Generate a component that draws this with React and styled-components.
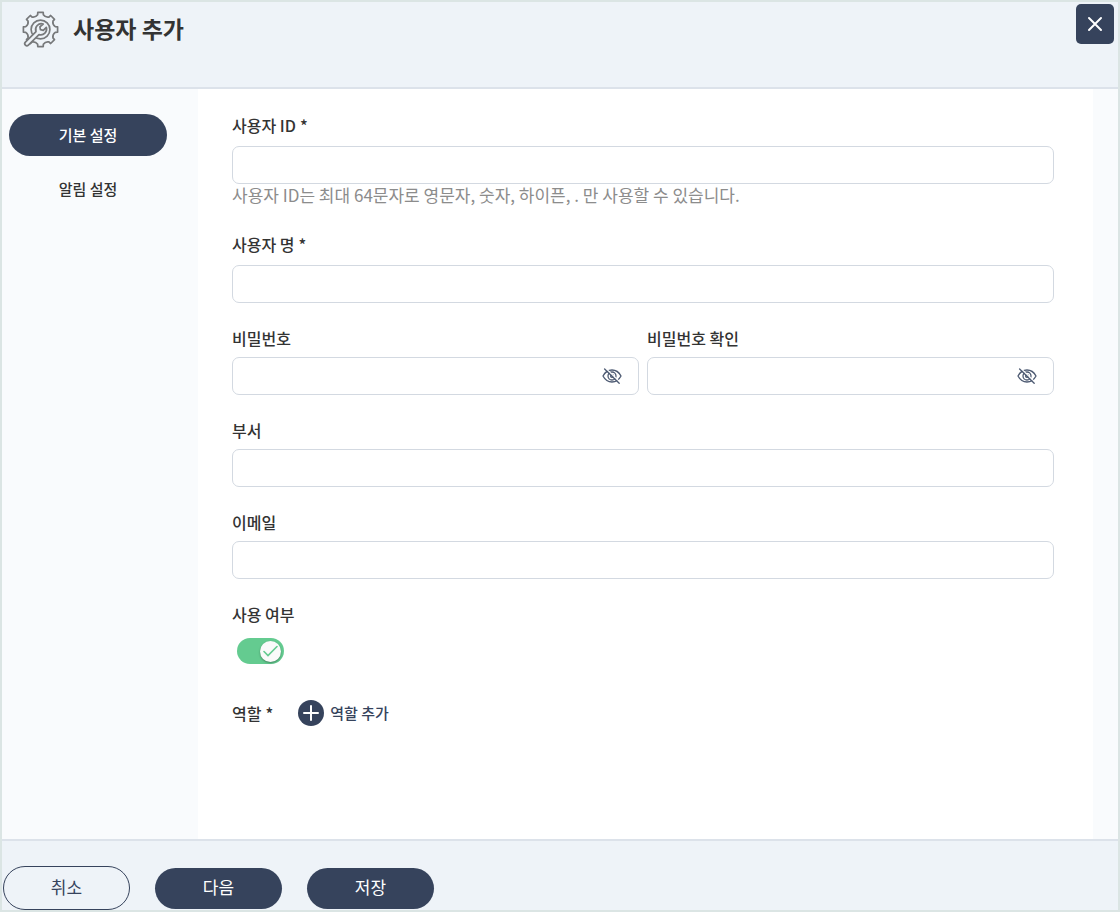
import React, { useState } from 'react'
import styled, { createGlobalStyle, css } from 'styled-components'

const GlobalStyle = createGlobalStyle`
  *, *::before, *::after {
    box-sizing: border-box;
  }
  body {
    margin: 0;
    font-family: "Noto Sans CJK KR", "Noto Sans", sans-serif;
    font-size: 16px;
    line-height: 22px;
    color: #333;
  }
  button, input {
    font: inherit;
    color: inherit;
  }
`

const Page = styled.div`
  display: flex;
  flex-direction: column;
  min-height: 100vh;
  border: 2px solid #dbe5e4;
  background-color: #eef3f8;
`

const Header = styled.header`
  display: flex;
  justify-content: space-between;
  align-items: flex-start;
  height: 87px;
  padding: 2px 4px 0 20px;
  border-bottom: 2px solid #dce2ea;
`

const TitleBox = styled.div`
  display: flex;
  align-items: flex-start;
  gap: 14px;
  padding-top: 7px;
`

const Title = styled.h1`
  margin: 0;
  font-size: 23px;
  font-weight: 700;
  line-height: 34px;
`

const CloseButton = styled.button`
  display: flex;
  align-items: center;
  justify-content: center;
  width: 38px;
  height: 40px;
  padding: 0;
  border: none;
  border-radius: 5px;
  background-color: #36435c;
  color: #fff;
  cursor: pointer;
`

const Body = styled.div`
  display: flex;
  flex: 1;
  padding-right: 25px;
  background-color: #f9fbfd;
`

const SideMenu = styled.nav`
  display: flex;
  flex-direction: column;
  gap: 12px;
  flex-shrink: 0;
  width: 196px;
  padding: 25px 31px 0 7px;
`

const MenuButton = styled.button`
  height: 42px;
  padding: 0;
  border: none;
  border-radius: 21px;
  font-size: 15px;
  font-weight: 500;
  cursor: pointer;
  background-color: ${props => props.$active ? '#36435c' : 'transparent'};
  color: ${props => props.$active ? '#fff' : '#333'};
`

const Form = styled.form`
  display: flex;
  flex-direction: column;
  gap: 24px;
  flex: 1;
  padding: 25px 39px 32px 34px;
  background-color: #fff;
`

const Field = styled.div`
  display: flex;
  flex-direction: column;
  gap: ${props => props.$gap || 8}px;
`

const FieldRow = styled.div`
  display: flex;
  gap: 8px;

  & > ${Field} {
    flex: 1;
  }
`

const labelStyle = css`
  font-size: 16px;
  font-weight: 500;
  line-height: 22px;
`

const Label = styled.label`
  ${labelStyle}
`

const LabelText = styled.span`
  ${labelStyle}
`

const Star = styled.span`
  margin-left: 4px;
`

const InputBox = styled.div`
  display: flex;
  align-items: center;
  height: 38px;
  padding-right: ${props => props.$icon ? '16px' : '0'};
  border: 1px solid #d3d9e1;
  border-radius: 7px;
  background-color: #fff;
`

const Input = styled.input`
  flex: 1;
  min-width: 0;
  height: 100%;
  padding: 0 12px;
  border: none;
  outline: none;
  background: transparent;
`

const EyeButton = styled.button`
  display: flex;
  padding: 0;
  border: none;
  background: none;
  color: #4d5a72;
  cursor: pointer;
`

const HelpText = styled.p`
  margin: 0 0 3px;
  font-size: 17px;
  color: #8c8c8c;
`

const Switch = styled.label`
  display: flex;
  align-items: center;
  width: 47px;
  height: 26px;
  margin-left: 5px;
  padding: 0 3px;
  border-radius: 13px;
  cursor: pointer;
  justify-content: ${props => props.$on ? 'flex-end' : 'flex-start'};
  background-color: ${props => props.$on ? '#64cb90' : '#c3c9d2'};
`

const SwitchInput = styled.input`
  width: 0;
  height: 0;
  margin: 0;
  appearance: none;
`

const Knob = styled.span`
  display: flex;
  align-items: center;
  justify-content: center;
  width: 21px;
  height: 21px;
  border-radius: 50%;
  background-color: #fafafa;
  box-shadow: 0 1px 2px rgba(0, 0, 0, 0.35);
`

const RoleRow = styled.div`
  display: flex;
  align-items: center;
  gap: 25px;
  padding-top: 12px;
`

const AddButton = styled.button`
  display: flex;
  align-items: center;
  gap: 6px;
  padding: 0;
  border: none;
  background: none;
  font-size: 15px;
  font-weight: 500;
  color: #36435c;
  cursor: pointer;
`

const Footer = styled.footer`
  display: flex;
  align-items: center;
  gap: 25px;
  padding: 25px 1px 0;
  border-top: 2px solid #dce2ea;
`

const FooterButton = styled.button`
  width: 127px;
  height: ${props => props.$outline ? '44px' : '41px'};
  padding: 0 0 2px;
  border: ${props => props.$outline ? '1px solid #36435c' : 'none'};
  border-radius: 22px;
  font-size: 17px;
  background-color: ${props => props.$outline ? 'transparent' : '#36435c'};
  color: ${props => props.$outline ? '#36435c' : '#fff'};
  cursor: pointer;
`

const point = (radius, degree) => {
  const rad = (degree * Math.PI) / 180
  return `${(18.5 + radius * Math.cos(rad)).toFixed(2)} ${(18.5 + radius * Math.sin(rad)).toFixed(2)}`
}

const gearPath = [0, 45, 90, 135, 180, 225, 270, 315]
  .map((a, i) => `${i ? 'L' : 'M'}${point(15, a - 11)} L${point(17.3, a - 9)} L${point(17.3, a + 9)} L${point(15, a + 11)} Q${point(12.8, a + 22.5)} ${point(15, a + 34)}`)
  .join(' ') + 'Z'

function GearIcon() {
  return (
    <svg width="37" height="37" viewBox="0 0 37 37" fill="none" stroke="#77797b" strokeWidth="1.7" strokeLinejoin="round" strokeLinecap="round">
      <path d={gearPath} />
      <circle cx="18.5" cy="18.5" r="9.4" />
      <path
        fill="#eef3f8"
        d="M21.2 13 a5.8 5.8 0 0 0 -7.2 7.6 L3.4 31.2 a2.1 2.1 0 0 0 3 3 L17 23.6 a5.8 5.8 0 0 0 7.3 -7.3 l-3 3 -2.9 -.7 -.5 -2.8Z"
      />
    </svg>
  )
}

function EyeOffIcon() {
  return (
    <svg width="20" height="16" viewBox="0 0 20 16" fill="none" stroke="currentColor" strokeWidth="1.3" strokeLinecap="round">
      <path d="M1 8 C3 4.2 6.2 2 10 2 S17 4.2 19 8 C17 11.8 13.8 14 10 14 S3 11.8 1 8Z" />
      <circle cx="10" cy="8" r="4" />
      <circle cx="10" cy="8" r="1.4" />
      <path d="M3.8 .4 L18 14.2" stroke="#fff" />
      <path d="M2.6 1 L17.2 15.2" />
    </svg>
  )
}

function TextField({ id, label, required, help }) {
  return (
    <Field $gap={required ? 10 : 8}>
      <Label htmlFor={id}>{label}{required && <Star>*</Star>}</Label>
      <div>
        <InputBox>
          <Input id={id} type="text" />
        </InputBox>
        {help && <HelpText>{help}</HelpText>}
      </div>
    </Field>
  )
}

function PasswordField({ id, label }) {
  const [visible, setVisible] = useState(false)

  return (
    <Field>
      <Label htmlFor={id}>{label}</Label>
      <InputBox $icon>
        <Input id={id} type={visible ? 'text' : 'password'} />
        <EyeButton type="button" aria-label="비밀번호 표시" onClick={() => setVisible(!visible)}>
          <EyeOffIcon />
        </EyeButton>
      </InputBox>
    </Field>
  )
}

function App() {
  const [menu, setMenu] = useState('basic')
  const [enabled, setEnabled] = useState(true)

  return (
    <Page>
      <GlobalStyle />
      <Header>
        <TitleBox>
          <GearIcon />
          <Title>사용자 추가</Title>
        </TitleBox>
        <CloseButton type="button" aria-label="닫기">
          <svg width="16" height="16" viewBox="0 0 16 16" stroke="currentColor" strokeWidth="2" strokeLinecap="round">
            <path d="M2 2 L14 14 M14 2 L2 14" />
          </svg>
        </CloseButton>
      </Header>
      <Body>
        <SideMenu>
          <MenuButton type="button" $active={menu === 'basic'} onClick={() => setMenu('basic')}>기본 설정</MenuButton>
          <MenuButton type="button" $active={menu === 'alarm'} onClick={() => setMenu('alarm')}>알림 설정</MenuButton>
        </SideMenu>
        <Form id="user-form" onSubmit={e => e.preventDefault()}>
          <TextField id="userId" label="사용자 ID" required help="사용자 ID는 최대 64문자로 영문자, 숫자, 하이픈, . 만 사용할 수 있습니다." />
          <TextField id="userName" label="사용자 명" required />
          <FieldRow>
            <PasswordField id="password" label="비밀번호" />
            <PasswordField id="passwordConfirm" label="비밀번호 확인" />
          </FieldRow>
          <TextField id="department" label="부서" />
          <TextField id="email" label="이메일" />
          <Field $gap={13}>
            <Label htmlFor="enabled">사용 여부</Label>
            <Switch $on={enabled}>
              <SwitchInput id="enabled" type="checkbox" role="switch" checked={enabled} onChange={e => setEnabled(e.target.checked)} />
              <Knob>
                {enabled && (
                  <svg width="15" height="12" viewBox="0 0 15 12" fill="none" stroke="#64cb90" strokeWidth="1.6" strokeLinecap="round">
                    <path d="M1 6.5 L5 10.5 L14 1.5" />
                  </svg>
                )}
              </Knob>
            </Switch>
          </Field>
          <RoleRow>
            <LabelText>역할<Star>*</Star></LabelText>
            <AddButton type="button">
              <svg width="26" height="26" viewBox="0 0 26 26">
                <circle cx="13" cy="13" r="13" fill="#36435c" />
                <path d="M13 6 V20 M6 13 H20" stroke="#fff" strokeWidth="2" strokeLinecap="round" />
              </svg>
              역할 추가
            </AddButton>
          </RoleRow>
        </Form>
      </Body>
      <Footer>
        <FooterButton type="button" $outline>취소</FooterButton>
        <FooterButton type="button">다음</FooterButton>
        <FooterButton type="submit" form="user-form">저장</FooterButton>
      </Footer>
    </Page>
  )
}

export default App
